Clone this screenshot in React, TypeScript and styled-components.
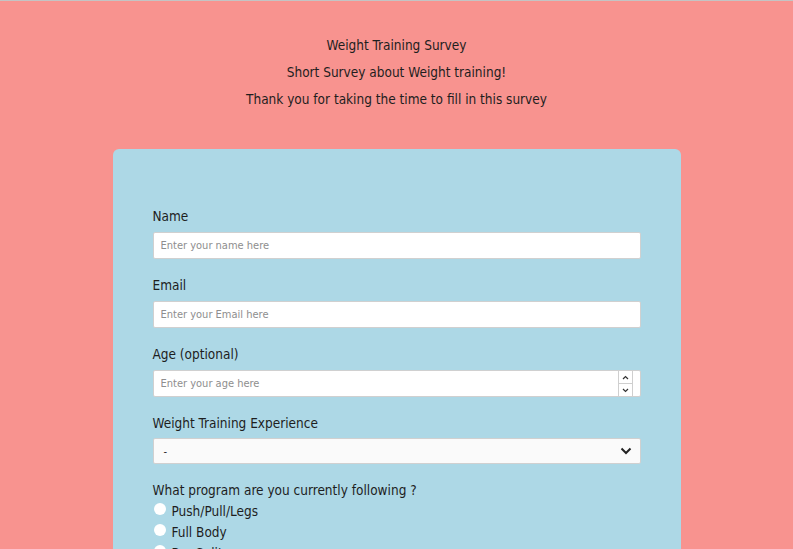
import React from "react";
import styled, { createGlobalStyle } from "styled-components";

const Global = createGlobalStyle`
  html, body { margin: 0; padding: 0; }
  body {
    background: #f8938f;
    border-top: 1px solid #c4c4c4;
    font-family: "DejaVu Sans Condensed", "Liberation Sans", sans-serif;
    color: #1e1e1e;
  }
`;

const Page = styled.div`
  display: flex;
  flex-direction: column;
  align-items: center;
`;

const Header = styled.header`
  display: flex;
  flex-direction: column;
  align-items: center;
  gap: 9px;
  padding-top: 35px;
  margin-bottom: 41px;
`;

const HeadLine = styled.p`
  margin: 0;
  font-size: 13.5px;
  line-height: 18px;
`;

const Card = styled.form`
  width: 488px;
  background: #add8e6;
  border-radius: 6px;
  padding: 58px 40px 40px;
  display: flex;
  flex-direction: column;
  gap: 17px;
`;

const Field = styled.div`
  display: flex;
  flex-direction: column;
  gap: 7px;
`;

const Label = styled.label`
  font-size: 13.5px;
  line-height: 18px;
`;

const Input = styled.input`
  box-sizing: border-box;
  display: block;
  height: 27px;
  width: 100%;
  border: 1px solid #d0d0d0;
  border-radius: 2px;
  background: #ffffff;
  padding: 0 7px;
  font-family: inherit;
  font-size: 11px;
  color: #333;
  &::placeholder { color: #8e8e8e; }
`;

const NumberWrap = styled.div`
  position: relative;
`;

const Spinner = styled.div`
  position: absolute;
  right: 8px;
  top: 1px;
  bottom: 1px;
  width: 13px;
  display: flex;
  flex-direction: column;
  border-left: 1px solid #cfcfcf;
  border-right: 1px solid #cfcfcf;
`;

const SpinBtn = styled.div<{ $top?: boolean }>`
  flex: 1;
  display: flex;
  align-items: center;
  justify-content: center;
  border-bottom: ${(p) => (p.$top ? "1px solid #cfcfcf" : "none")};
`;

const Select = styled.div`
  box-sizing: border-box;
  height: 26px;
  margin-top: -1px;
  border: 1px solid #d0d0d0;
  border-radius: 2px;
  background: #fafafa;
  display: flex;
  align-items: center;
  justify-content: space-between;
  padding: 0 8px 0 10px;
  font-size: 11px;
`;

const RadioGroup = styled.div`
  display: flex;
  flex-direction: column;
  gap: 3px;
  margin-top: -4px;
`;

const RadioRow = styled.label`
  display: flex;
  align-items: center;
  gap: 6px;
  font-size: 13.5px;
  line-height: 18px;
  padding-left: 1px;
`;

const Dot = styled.span`
  width: 12px;
  height: 12px;
  border-radius: 50%;
  background: #fff;
  margin-top: -5px;
`;

const Chev = ({ up }: { up?: boolean }) => (
  <svg width="7" height="5" viewBox="0 0 7 5">
    <path d={up ? "M1 4 L3.5 1.5 L6 4" : "M1 1 L3.5 3.5 L6 1"} fill="none" stroke="#333" strokeWidth="1.2" />
  </svg>
);

export default function App() {
  return (
    <>
      <Global />
      <Page>
        <Header>
          <HeadLine>Weight Training Survey</HeadLine>
          <HeadLine>Short Survey about Weight training!</HeadLine>
          <HeadLine>Thank you for taking the time to fill in this survey</HeadLine>
        </Header>
        <Card>
          <Field>
            <Label>Name</Label>
            <Input placeholder="Enter your name here" />
          </Field>
          <Field>
            <Label>Email</Label>
            <Input placeholder="Enter your Email here" />
          </Field>
          <Field>
            <Label>Age (optional)</Label>
            <NumberWrap>
              <Input placeholder="Enter your age here" />
              <Spinner>
                <SpinBtn $top><Chev up /></SpinBtn>
                <SpinBtn><Chev /></SpinBtn>
              </Spinner>
            </NumberWrap>
          </Field>
          <Field>
            <Label>Weight Training Experience</Label>
            <Select>
              <span>-</span>
              <svg width="12" height="8" viewBox="0 0 12 8">
                <path d="M1.5 1.5 L6 6 L10.5 1.5" fill="none" stroke="#222" strokeWidth="2" />
              </svg>
            </Select>
          </Field>
          <Field>
            <Label>What program are you currently following ?</Label>
            <RadioGroup>
              <RadioRow><Dot />Push/Pull/Legs</RadioRow>
              <RadioRow><Dot />Full Body</RadioRow>
              <RadioRow><Dot />Bro Split</RadioRow>
            </RadioGroup>
          </Field>
        </Card>
      </Page>
    </>
  );
}
